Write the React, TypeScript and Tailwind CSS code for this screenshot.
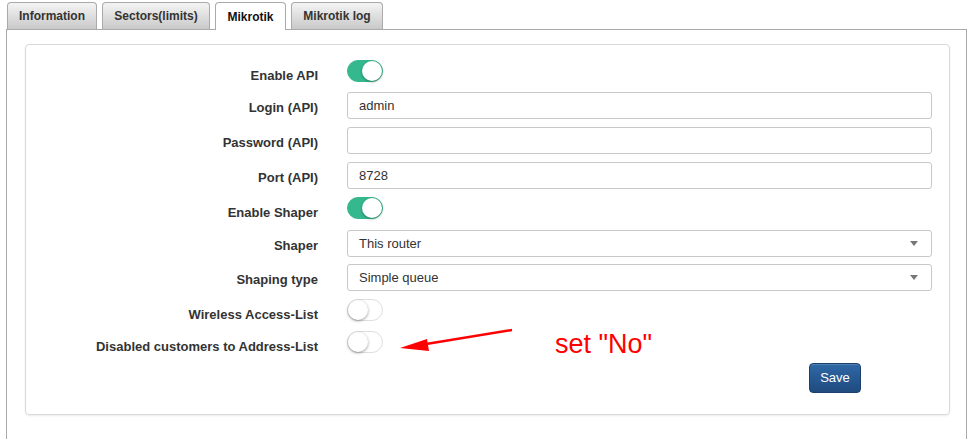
import React from "react";

function Toggle({ on }: { on: boolean }) {
    return (
        <div
            className={
                on
                    ? "relative w-[36px] h-[22px] rounded-full bg-[#36b88f] border border-[#36b88f]"
                    : "relative w-[36px] h-[22px] rounded-full bg-white border border-[#dedede]"
            }
        >
            <div
                className={
                    on
                        ? "absolute top-0 right-0 w-[20px] h-[20px] rounded-full bg-white shadow-[0_1px_3px_rgba(0,0,0,0.35)]"
                        : "absolute top-0 left-0 w-[20px] h-[20px] rounded-full bg-white shadow-[0_1px_3px_rgba(0,0,0,0.4)]"
                }
            />
        </div>
    );
}

function Label({ text, toggle }: { text: string; toggle?: boolean }) {
    return (
        <div
            className={
                toggle
                    ? "w-[292px] shrink-0 text-right pt-[9px] text-[13px] leading-[16px] font-bold text-[#333]"
                    : "w-[292px] shrink-0 text-right pt-[8px] text-[13px] leading-[16px] font-bold text-[#333]"
            }
        >
            {text}
        </div>
    );
}

function TextRow({ label, value, className }: { label: string; value: string; className: string }) {
    return (
        <div className={"flex gap-[29px] items-start " + className}>
            <Label text={label} />
            <input
                type="text"
                defaultValue={value}
                className="w-[585px] h-[27px] px-[11px] border border-[#c8c8c8] rounded-[3px] text-[13px] text-[#333] outline-none"
            />
        </div>
    );
}

function SelectRow({ label, value, className }: { label: string; value: string; className: string }) {
    return (
        <div className={"flex gap-[29px] items-start " + className}>
            <Label text={label} />
            <div className="w-[585px] h-[27px] px-[11px] border border-[#c8c8c8] rounded-[3px] text-[13px] text-[#333] flex items-center justify-between">
                <span>{value}</span>
                <span className="w-0 h-0 border-l-[4px] border-r-[4px] border-t-[5px] border-l-transparent border-r-transparent border-t-[#777] mr-[2px]" />
            </div>
        </div>
    );
}

function ToggleRow({ label, on, className }: { label: string; on: boolean; className: string }) {
    return (
        <div className={"flex gap-[29px] items-start h-[24px] " + className}>
            <Label text={label} toggle />
            <div className="pt-[1px]">
                <Toggle on={on} />
            </div>
        </div>
    );
}

export default function App() {
    const tabs = [
        { name: "Information", w: "w-[90px]" },
        { name: "Sectors(limits)", w: "w-[108px]" },
        { name: "Mikrotik", w: "w-[71px]", active: true },
        { name: "Mikrotik log", w: "w-[92px]" },
    ];

    return (
        <div className="relative w-[972px] h-[439px] overflow-hidden bg-white font-['Liberation_Sans',Arial,sans-serif]">
            <div className="flex gap-[5px] pl-[7px] pt-[2px] relative z-10">
                {tabs.map((t) =>
                    t.active ? (
                        <div
                            key={t.name}
                            className={t.w + " h-[28px] bg-white border border-b-0 border-[#aaa] rounded-t-[4px] flex items-center justify-center text-[12px] font-bold text-[#111]"}
                        >
                            {t.name}
                        </div>
                    ) : (
                        <div
                            key={t.name}
                            className={t.w + " h-[27px] bg-gradient-to-b from-[#f4f4f4] to-[#c9c9c9] border border-[#aaa] border-b-0 rounded-t-[4px] flex items-center justify-center text-[12px] font-bold text-[#333]"}
                        >
                            {t.name}
                        </div>
                    )
                )}
            </div>

            <div className="ml-[6px] -mt-px w-[961px] h-[430px] border border-b-0 border-[#aaa] pl-[18px] pr-[16px] pt-[14px]">
                <div className="w-[925px] border border-[#d9d9d9] rounded-[4px] shadow-[0_1px_2px_rgba(0,0,0,0.08)] pt-[14px] pb-[21px]">
                    <ToggleRow label="Enable API" on className="" />
                    <TextRow label="Login (API)" value="admin" className="mt-[9px]" />
                    <TextRow label="Password (API)" value="" className="mt-[8px]" />
                    <TextRow label="Port (API)" value="8728" className="mt-[8px]" />
                    <ToggleRow label="Enable Shaper" on className="mt-[7px]" />
                    <SelectRow label="Shaper" value="This router" className="mt-[10px]" />
                    <SelectRow label="Shaping type" value="Simple queue" className="mt-[7px]" />
                    <ToggleRow label="Wireless Access-List" on={false} className="mt-[7px]" />
                    <ToggleRow label="Disabled customers to Address-List" on={false} className="mt-[8px]" />
                    <div className="flex mt-[9px] pl-[783px]">
                        <button className="w-[52px] h-[30px] rounded-[4px] border border-[#1b406b] bg-gradient-to-b from-[#2f68a6] to-[#1f4b80] text-white text-[13px] shadow-[inset_0_1px_0_rgba(255,255,255,0.15)]">
                            Save
                        </button>
                    </div>
                </div>
            </div>

            <svg className="absolute left-0 top-0" width="972" height="439">
                <line x1="512" y1="330" x2="420" y2="345" stroke="#ff0000" strokeWidth="2.5" />
                <polygon points="400,348 427,339 429,351" fill="#ff0000" />
            </svg>
            <div className="absolute left-[555px] top-[331px] text-[27px] leading-none text-[#ff0000]">
                set "No"
            </div>
        </div>
    );
}
